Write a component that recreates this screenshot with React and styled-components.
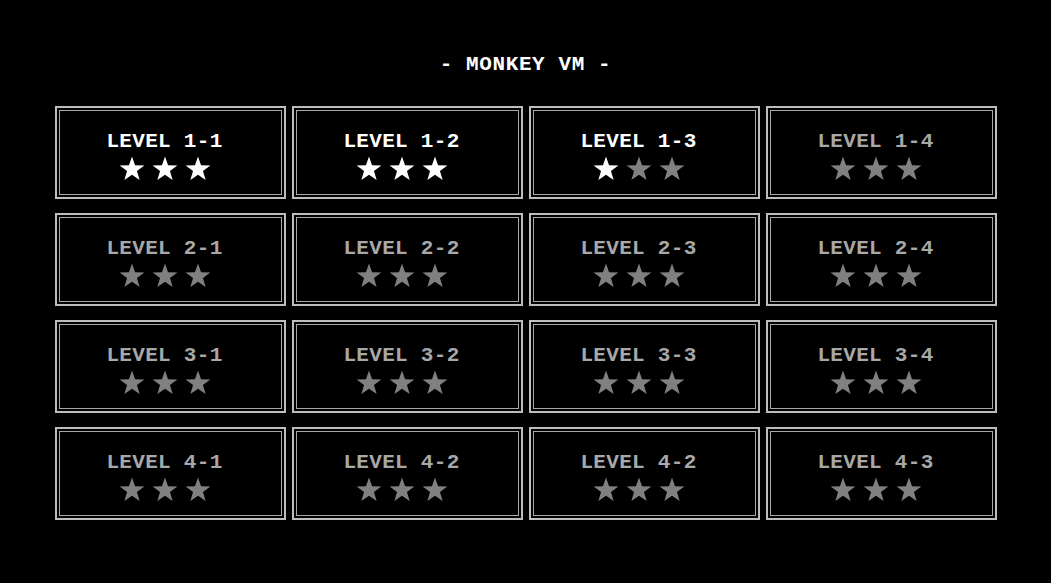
import React from "react";
import styled, { createGlobalStyle } from "styled-components";

const GlobalStyle = createGlobalStyle`
  html, body {
    margin: 0;
    padding: 0;
    background: #000;
  }
  body {
    font-family: "Liberation Mono", "DejaVu Sans Mono", monospace;
  }
`;

const levels = [
  { name: "LEVEL 1-1", stars: 3, open: true },
  { name: "LEVEL 1-2", stars: 3, open: true },
  { name: "LEVEL 1-3", stars: 1, open: true },
  { name: "LEVEL 1-4", stars: 0 },
  { name: "LEVEL 2-1", stars: 0 },
  { name: "LEVEL 2-2", stars: 0 },
  { name: "LEVEL 2-3", stars: 0 },
  { name: "LEVEL 2-4", stars: 0 },
  { name: "LEVEL 3-1", stars: 0 },
  { name: "LEVEL 3-2", stars: 0 },
  { name: "LEVEL 3-3", stars: 0 },
  { name: "LEVEL 3-4", stars: 0 },
  { name: "LEVEL 4-1", stars: 0 },
  { name: "LEVEL 4-2", stars: 0 },
  { name: "LEVEL 4-2", stars: 0 },
  { name: "LEVEL 4-3", stars: 0 },
];

const Star = ({ lit }) => (
  <StarIcon viewBox="0 0 26 25" $lit={lit}>
    <polygon points="13,0.5 16.06,9.29 25.36,9.48 17.95,15.11 20.64,24.02 13,18.7 5.36,24.02 8.05,15.11 0.64,9.48 9.94,9.29" />
  </StarIcon>
);

const App = () => {
  return (
    <Screen>
      <GlobalStyle />
      <Title>- MONKEY VM -</Title>
      <LevelGrid>
        {levels.map((lvl, i) => (
          <LevelCard key={i}>
            <LevelName $open={lvl.open}>{lvl.name}</LevelName>
            <Stars>
              {[0, 1, 2].map((s) => (
                <Star key={s} lit={s < lvl.stars} />
              ))}
            </Stars>
          </LevelCard>
        ))}
      </LevelGrid>
    </Screen>
  );
};

const Screen = styled.div`
  min-height: 583px;
  background: #000;
  padding-top: 53px;
  box-sizing: border-box;
  display: flex;
  flex-direction: column;
  align-items: center;
`;

const Title = styled.h1`
  margin: 0 0 29px;
  font-size: 21px;
  line-height: 24px;
  font-weight: bold;
  color: #fff;
  letter-spacing: 0.6px;
  white-space: pre;
`;

const LevelGrid = styled.div`
  display: grid;
  grid-template-columns: repeat(4, 231px);
  grid-auto-rows: 93px;
  column-gap: 6px;
  row-gap: 14px;
`;

const LevelCard = styled.div`
  box-sizing: border-box;
  border: 2px solid #bdbdbd;
  box-shadow: inset 0 0 0 2px #000, inset 0 0 0 3px #a8a8a8;
  background: #000;
  display: flex;
  flex-direction: column;
  align-items: center;
  justify-content: center;
  gap: 2px;
  padding: 5px 11px 0 0;
  cursor: pointer;
`;

const LevelName = styled.div`
  font-size: 21px;
  line-height: 24px;
  font-weight: bold;
  letter-spacing: 0.3px;
  color: ${(p) => (p.$open ? "#fff" : "#a8a8a8")};
  white-space: pre;
`;

const Stars = styled.div`
  display: flex;
  gap: 7px;
`;

const StarIcon = styled.svg`
  width: 26px;
  height: 25px;
  display: block;
  fill: ${(p) => (p.$lit ? "#fff" : "#808080")};
`;

export default App;
